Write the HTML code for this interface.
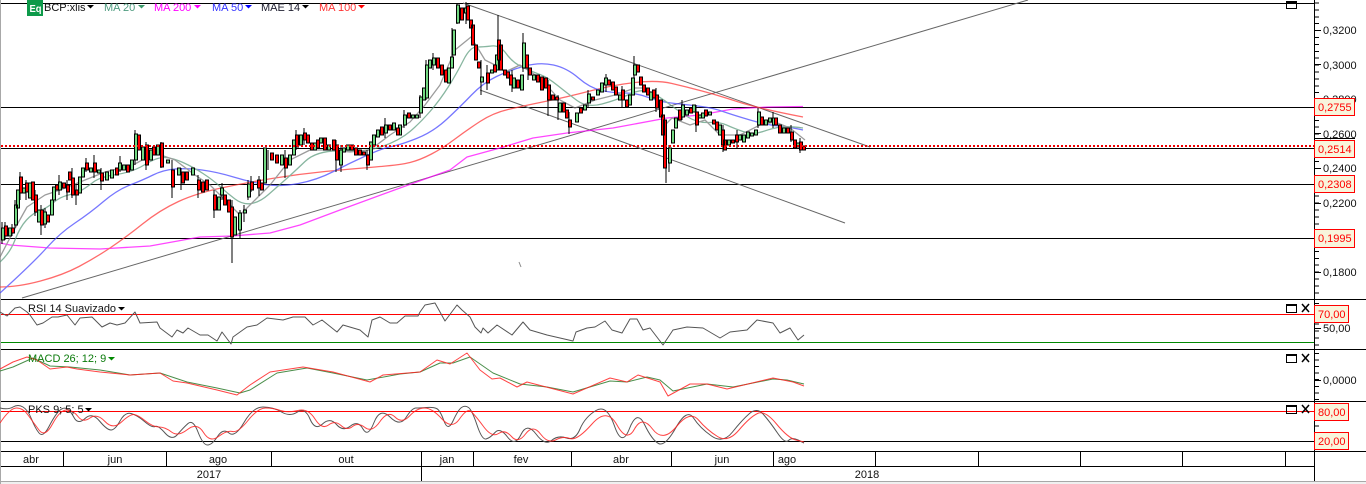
<!DOCTYPE html>
<html><head><meta charset="utf-8"><title>BCP:xlis</title>
<style>
html,body{margin:0;padding:0;width:1366px;height:484px;overflow:hidden;background:#fff}
svg{display:block;position:absolute;left:0;top:0}
text{font-family:"Liberation Sans",Arial,sans-serif;font-size:11px;fill:#111}
.box{fill:#f8f5dc;stroke:#f00;stroke-width:1}
.lb{fill:#f00}
.w{fill:none;stroke:#000;stroke-width:1}
</style></head><body>
<svg width="1366" height="484" viewBox="0 0 1366 484">
<rect x="0" y="0" width="1366" height="484" fill="#fff"/>
<rect x="0" y="481" width="1366" height="3" fill="#f0f0f0"/>
<rect x="0" y="481" width="1366" height="1" fill="#a8a8a8"/>
<rect x="0" y="0" width="1" height="484" fill="#a8a8a8"/>

<!-- horizontal levels -->
<g shape-rendering="crispEdges" stroke-width="1" fill="none">
<path stroke="#000" d="M1 3.5H1314M1 107.5H1314M1 148.5H1314M1 184.5H1314M1 238.5H1314M1 299.5H1366M1 349.5H1366M1 401.5H1366M1 441.5H1314M1 451.5H1366M1 466.5H1314"/>
<path stroke="#f00" d="M1 314.5H1314M1 411.5H1314"/>
<path stroke="#080" d="M1 342.5H1314"/>
<path stroke="#000" d="M1314.5 0V481M63.5 451V466M166.5 451V466M271.5 451V466M421.5 451V481M473.5 451V466M571.5 451V466M671.5 451V466M773.5 451V466M875.5 451V466M978.5 451V466M1080.5 451V466M1182.5 451V466M1285.5 451V466"/>
</g>

<!-- trend lines -->
<g fill="none" stroke="#666" stroke-width="1">
<path d="M22 298L1028 0"/>
<path d="M463 3L870 147"/>
<path d="M480 90L845 223"/>
</g>

<!-- moving averages -->
<g fill="none" stroke-width="1.3" opacity=".72" stroke-linejoin="round">
<polyline stroke="#f0f" points="0,243 10,245 50,248 100,249 150,246 200,237 232,236 270,233 300,225 340,210 400,188 450,170 467,157 500,148 533,138 567,133 613,128 667,118 700,115 733,109 767,107 803,106.5"/>
<path stroke="#f33" d="M0 287 Q18 287 40.5 281 Q63 275 79 266.5 Q95 258 110 248 Q125 238 142.5 224 Q160 210 178.5 201.5 Q197 193 223.5 187.5 Q250 182 275 178 Q300 174 325 171.5 Q350 169 375 167 Q400 165 410 162.5 Q420 160 431.5 154 Q443 148 455 139 Q467 130 480 121.5 Q493 113 508 109.5 Q523 106 545 101.5 Q567 97 590 91 Q613 85 635 82.5 Q657 80 672 83.5 Q687 87 702 91 Q717 95 737 101.5 Q757 108 803 117"/>
<path stroke="#44f" d="M0 293 Q33 263 46.5 248 Q60 233 75 223 Q90 213 103.5 201.5 Q117 190 130 185 Q143 180 153 175 Q163 170 175 169 Q187 168 202 170 Q217 172 233.5 177 Q250 182 265 184.5 Q280 187 298.5 183.5 Q317 180 333.5 171.5 Q350 163 366.5 155.5 Q383 148 391.5 146.5 Q400 145 416.5 138.5 Q433 132 446.5 119.5 Q460 107 471.5 95 Q483 83 496.5 76.5 Q510 70 525 66 Q540 62 553.5 65 Q567 68 578.5 78 Q590 88 601.5 90.5 Q613 93 625 93 Q637 93 648.5 97.5 Q660 102 675 103.5 Q690 105 701.5 106.5 Q713 108 723 111.5 Q733 115 750 120 Q767 125 778.5 126 Q790 127 803 130"/>
<path stroke="#5b9a7c" d="M0 262 Q10 253 15 240 Q20 227 26.5 220 Q33 213 40 210.5 Q47 208 53.5 202.5 Q60 197 68.5 195 Q77 193 82 190 Q87 187 93.5 182 Q100 177 116.5 174.5 Q133 172 145 164.5 Q157 157 165 157.5 Q173 158 183 162.5 Q193 167 203 173.5 Q213 180 220 186.5 Q227 193 235 199 Q243 205 251.5 203.5 Q260 202 268.5 194.5 Q277 187 285 180 Q293 173 305 161.5 Q317 150 342 151 Q367 152 383.5 146 Q400 140 410 131.5 Q420 123 430 111.5 Q440 100 448.5 86.5 Q457 73 463.5 60 Q470 47 476.5 47 Q483 47 491.5 46 Q500 45 506.5 54 Q513 63 523 67.5 Q533 72 540 74.5 Q547 77 557 85 Q567 93 577 100.5 Q587 108 602 104 Q617 100 630 94 Q643 88 651.5 92.5 Q660 97 668.5 103.5 Q677 110 687 116.5 Q697 123 708.5 122.5 Q720 122 726.5 125 Q733 128 743 131.5 Q753 135 763 131.5 Q773 128 781.5 127 Q790 126 803 128"/>
<polyline stroke="#777" points="0,257 13,232 27,207 45,195 60,190 80,182 105,172 133,165 155,153 175,160 195,175 210,185 225,200 240,215 255,200 270,185 290,160 310,150 330,150 350,152 370,150 390,135 410,122 425,105 440,85 455,50 471,37 485,60 495,65 505,72 520,65 540,78 560,100 575,108 595,100 615,95 635,88 645,88 660,105 665,125 672,118 690,125 705,120 720,135 740,135 760,125 775,122 790,128 805,140"/>
</g>

<!-- candles -->
<g shape-rendering="crispEdges" stroke="#000" stroke-width="1">
<path fill="none" d="M2 222V244M5 222V240M12 224V236M15 200V228M20 172V200M26 180V200M35 190V216M41 205V235M45 208V228M59 175V195M67 180V200M72 168V198M76 185V205M86 158V172M94 155V178M101 168V190M120 156V172M135 130V165M146 142V170M161 142V168M172 160V198M181 168V190M198 175V198M214 190V218M222 183V200M232 200V263M240 210V238M244 205V222M248 180V200M251 176V192M259 176V196M268 150V170M285 150V178M296 130V150M304 128V145M336 140V172M341 145V172M367 150V170M385 118V138M404 110V128M420 95V118M426 60V100M433 53V70M452 28V58M457 3V24M466 2V24M481 60V95M487 65V90M498 15V62M512 70V92M523 33V72M528 55V80M548 80V116M558 95V120M569 112V134M588 90V108M606 74V92M622 86V108M634 56V78M656 88V112M666 140V183M669 145V172M682 100V120M696 105V132M723 125V152M737 130V148M758 108V128M773 112V128M791 125V142M800 138V153"/>
<path fill="#72d882" d="M1.5 228h3V240h-3zM8.5 228h3V236h-3zM14.5 205h3V225h-3zM16.5 190h3V208h-3zM22.5 188h3V193h-3zM28.5 183h3V198h-3zM37.5 210h3V222h-3zM43.5 212h3V224h-3zM50.5 200h3V215h-3zM52.5 187h3V200h-3zM58.5 182h3V190h-3zM78.5 177h3V193h-3zM81.5 168h3V177h-3zM89.5 168h3V172h-3zM97.5 170h3V173h-3zM105.5 172h3V180h-3zM110.5 170h3V178h-3zM118.5 163h3V170h-3zM122.5 165h3V170h-3zM130.5 160h3V170h-3zM134.5 134h3V160h-3zM141.5 147h3V160h-3zM149.5 150h3V160h-3zM156.5 145h3V155h-3zM166.5 160h3V163h-3zM177.5 168h3V175h-3zM191.5 168h3V175h-3zM217.5 197h3V210h-3zM220.5 188h3V195h-3zM233.5 217h3V235h-3zM238.5 213h3V230h-3zM243.5 210h3V213h-3zM247.5 184h3V197h-3zM263.5 148h3V183h-3zM280.5 155h3V165h-3zM288.5 155h3V165h-3zM292.5 140h3V155h-3zM299.5 135h3V145h-3zM313.5 143h3V150h-3zM319.5 138h3V143h-3zM327.5 145h3V150h-3zM339.5 150h3V165h-3zM342.5 148h3V152h-3zM346.5 145h3V150h-3zM369.5 142h3V160h-3zM372.5 135h3V145h-3zM376.5 130h3V137h-3zM384.5 125h3V133h-3zM392.5 123h3V130h-3zM398.5 125h3V135h-3zM403.5 115h3V125h-3zM411.5 115h3V118h-3zM415.5 115h3V118h-3zM419.5 97h3V113h-3zM422.5 88h3V100h-3zM425.5 65h3V98h-3zM428.5 60h3V68h-3zM432.5 58h3V65h-3zM447.5 68h3V83h-3zM450.5 57h3V68h-3zM452.5 30h3V55h-3zM456.5 5h3V23h-3zM464.5 8h3V13h-3zM480.5 77h3V82h-3zM490.5 70h3V73h-3zM495.5 55h3V70h-3zM512.5 78h3V88h-3zM520.5 75h3V90h-3zM522.5 43h3V68h-3zM532.5 75h3V80h-3zM558.5 103h3V112h-3zM575.5 113h3V122h-3zM583.5 105h3V110h-3zM587.5 94h3V103h-3zM596.5 90h3V95h-3zM600.5 83h3V92h-3zM604.5 78h3V85h-3zM618.5 95h3V100h-3zM628.5 95h3V105h-3zM631.5 78h3V95h-3zM633.5 65h3V75h-3zM649.5 92h3V100h-3zM668.5 148h3V163h-3zM671.5 130h3V143h-3zM674.5 118h3V128h-3zM681.5 105h3V117h-3zM685.5 110h3V115h-3zM692.5 105h3V112h-3zM698.5 115h3V118h-3zM701.5 113h3V118h-3zM708.5 112h3V115h-3zM718.5 125h3V135h-3zM727.5 140h3V145h-3zM738.5 135h3V140h-3zM742.5 135h3V142h-3zM746.5 132h3V138h-3zM750.5 133h3V136h-3zM754.5 130h3V135h-3zM757.5 112h3V125h-3zM764.5 120h3V125h-3zM768.5 118h3V122h-3zM772.5 118h3V125h-3zM782.5 128h3V133h-3zM796.5 143h3V147h-3z"/>
<path fill="#f00" d="M4.5 226h3V236h-3zM11.5 228h3V233h-3zM19.5 177h3V193h-3zM25.5 183h3V192h-3zM31.5 182h3V200h-3zM34.5 195h3V212h-3zM40.5 210h3V225h-3zM46.5 215h3V222h-3zM55.5 185h3V190h-3zM62.5 183h3V188h-3zM66.5 185h3V192h-3zM68.5 172h3V180h-3zM71.5 178h3V195h-3zM75.5 190h3V195h-3zM85.5 163h3V170h-3zM93.5 163h3V172h-3zM100.5 173h3V181h-3zM115.5 168h3V175h-3zM126.5 165h3V172h-3zM137.5 135h3V150h-3zM145.5 145h3V165h-3zM152.5 147h3V155h-3zM160.5 143h3V167h-3zM171.5 170h3V187h-3zM181.5 172h3V183h-3zM185.5 172h3V180h-3zM197.5 180h3V190h-3zM201.5 182h3V192h-3zM205.5 180h3V190h-3zM213.5 195h3V210h-3zM223.5 195h3V205h-3zM227.5 200h3V212h-3zM230.5 207h3V237h-3zM250.5 182h3V190h-3zM257.5 180h3V188h-3zM260.5 183h3V190h-3zM270.5 153h3V160h-3zM275.5 155h3V163h-3zM284.5 158h3V168h-3zM295.5 135h3V147h-3zM303.5 133h3V140h-3zM306.5 135h3V143h-3zM310.5 143h3V150h-3zM316.5 140h3V148h-3zM323.5 138h3V150h-3zM332.5 140h3V150h-3zM335.5 145h3V160h-3zM350.5 145h3V150h-3zM354.5 148h3V155h-3zM358.5 150h3V155h-3zM362.5 152h3V155h-3zM366.5 155h3V165h-3zM380.5 127h3V135h-3zM388.5 125h3V130h-3zM396.5 128h3V135h-3zM407.5 113h3V118h-3zM436.5 58h3V68h-3zM440.5 65h3V75h-3zM444.5 70h3V82h-3zM460.5 8h3V20h-3zM466.5 6h3V20h-3zM469.5 20h3V28h-3zM471.5 25h3V45h-3zM474.5 45h3V60h-3zM477.5 62h3V68h-3zM486.5 73h3V83h-3zM493.5 65h3V72h-3zM497.5 40h3V60h-3zM499.5 45h3V70h-3zM503.5 70h3V75h-3zM506.5 72h3V78h-3zM509.5 75h3V85h-3zM516.5 80h3V88h-3zM525.5 55h3V68h-3zM528.5 68h3V75h-3zM536.5 75h3V82h-3zM540.5 77h3V90h-3zM544.5 78h3V88h-3zM547.5 85h3V100h-3zM551.5 95h3V100h-3zM555.5 97h3V100h-3zM562.5 103h3V112h-3zM565.5 110h3V118h-3zM568.5 120h3V127h-3zM579.5 108h3V113h-3zM591.5 97h3V100h-3zM607.5 80h3V85h-3zM611.5 82h3V90h-3zM614.5 87h3V95h-3zM621.5 90h3V100h-3zM625.5 100h3V107h-3zM636.5 65h3V72h-3zM639.5 77h3V85h-3zM642.5 85h3V92h-3zM646.5 88h3V95h-3zM652.5 90h3V98h-3zM655.5 95h3V108h-3zM659.5 100h3V117h-3zM661.5 115h3V135h-3zM663.5 120h3V168h-3zM678.5 110h3V120h-3zM689.5 108h3V113h-3zM695.5 112h3V125h-3zM704.5 110h3V116h-3zM712.5 120h3V124h-3zM715.5 122h3V130h-3zM721.5 130h3V145h-3zM723.5 140h3V150h-3zM731.5 140h3V143h-3zM735.5 135h3V142h-3zM760.5 117h3V125h-3zM774.5 118h3V125h-3zM778.5 125h3V133h-3zM786.5 128h3V133h-3zM790.5 132h3V140h-3zM793.5 140h3V148h-3zM799.5 142h3V150h-3zM802.5 146h3V150h-3z"/>
</g>
<path d="M519 262l2 5" stroke="#888" fill="none"/>

<!-- dotted level -->
<line x1="1" y1="146" x2="1314" y2="146" stroke="#e00" stroke-width="2" stroke-dasharray="2 2" shape-rendering="crispEdges"/>

<!-- RSI -->
<polyline fill="none" stroke="#555" stroke-width="1" stroke-linejoin="round" points="0,312 7,316 15,308 20,307 27,312 30,315 37,325 43,323 52,317 58,317 67,315 75,325 80,318 92,317 102,327 110,323 117,325 125,323 135,312 140,323 157,322 160,328 172,337 177,330 183,333 188,328 200,335 208,335 217,341 222,332 231,344 233,337 247,327 257,325 267,318 283,320 293,317 305,317 313,325 322,320 337,332 343,325 360,330 368,337 372,320 380,317 390,323 397,323 405,316 418,316 420,312 425,305 435,303 445,321 457,305 462,310 470,317 475,327 481,333 483,328 488,333 497,325 512,335 523,322 530,330 547,335 573,341 576,332 587,328 595,327 605,321 612,330 622,333 630,319 637,319 643,330 650,328 663,345 673,330 687,327 703,328 720,338 730,332 747,330 757,320 773,323 780,333 790,328 798,340 804,335"/>
<!-- MACD -->
<polyline fill="none" stroke="#2a7a2a" stroke-width="1" opacity=".85" stroke-linejoin="round" points="0,371 13,367 33,358 50,366 70,367 100,370 130,375 160,373 187,382 217,388 240,393 250,390 277,373 307,368 333,373 367,380 400,374 420,372 440,363 453,363 470,357 493,373 520,384 547,387 573,392 610,381 627,382 647,377 660,380 673,391 707,384 733,387 773,379 787,380 804,384"/>
<polyline fill="none" stroke="#f22" stroke-width="1" opacity=".85" stroke-linejoin="round" points="0,369 13,362 27,357 37,360 50,369 67,367 77,369 100,372 130,375 160,373 173,381 187,383 217,390 237,395 250,385 270,372 303,367 333,372 370,382 383,375 420,372 437,360 450,364 467,353 480,370 492,379 500,378 517,387 527,382 573,394 610,378 627,382 638,375 660,382 668,396 690,384 707,384 727,389 773,378 793,382 804,386"/>
<!-- PKS -->
<path fill="none" stroke="#555" stroke-width="1" d="M0 408 Q8 410 13 407 Q18 404 23 407 Q28 410 31.5 419 Q35 428 39 433 Q43 438 49 426.5 Q55 415 59 411 Q63 407 66.5 408.5 Q70 410 74 417.5 Q78 425 85 418.5 Q92 412 99.5 421 Q107 430 111 430 Q115 430 120 421 Q125 412 131 413.5 Q137 415 144.5 421.5 Q152 428 155 426.5 Q158 425 165 433 Q172 441 177.5 434.5 Q183 428 188 423.5 Q193 419 198 432 Q203 445 207.5 445 Q212 445 217.5 436.5 Q223 428 229 433 Q235 438 244 422.5 Q253 407 263 407 Q273 407 281.5 412 Q290 417 297.5 412 Q305 407 310 419 Q315 431 322.5 424 Q330 417 336.5 424.5 Q343 432 350.5 426 Q358 420 363 429 Q368 438 374 422.5 Q380 407 390 417 Q400 427 406 417.5 Q412 408 416 408 Q420 408 426.5 407.5 Q433 407 436.5 408.5 Q440 410 444 421 Q448 432 453 421 Q458 410 461.5 407.5 Q465 405 468.5 407.5 Q472 410 477 425 Q482 440 486 439 Q490 438 495 432.5 Q500 427 507.5 437 Q515 447 521 434.5 Q527 422 536 434 Q545 446 551.5 440.5 Q558 435 566.5 438 Q575 441 580 429 Q585 417 596 410.5 Q607 404 614.5 426 Q622 448 629.5 428.5 Q637 409 644.5 424.5 Q652 440 658.5 443.5 Q665 447 676 427.5 Q687 408 693.5 418 Q700 428 711.5 436 Q723 444 732.5 432 Q742 420 749.5 413.5 Q757 407 763.5 414.5 Q770 422 777.5 433 Q785 444 788.5 440.5 Q792 437 798 440 L804 443"/>
<path fill="none" stroke="#f22" stroke-width="1" opacity=".85" d="M0 423 Q10 408 16.5 408 Q23 408 28 415 Q33 422 39 430 Q45 438 52.5 424 Q60 410 66.5 410 Q73 410 78 416.5 Q83 423 90 418 Q97 413 105 421.5 Q113 430 121.5 422 Q130 414 134 414.5 Q138 415 145.5 421 Q153 427 159 427 Q165 427 171.5 432 Q178 437 187.5 429.5 Q197 422 203.5 432.5 Q210 443 218.5 436.5 Q227 430 232.5 431.5 Q238 433 248 420.5 Q258 408 265.5 408 Q273 408 280.5 410.5 Q288 413 298 410.5 Q308 408 315 419 Q322 430 328.5 425 Q335 420 341 425.5 Q347 431 352.5 426.5 Q358 422 365 427.5 Q372 433 380 421.5 Q388 410 395 417 Q402 424 409.5 416 Q417 408 424.5 408 Q432 408 442 419 Q452 430 459.5 419 Q467 408 471 411.5 Q475 415 483.5 426.5 Q492 438 498.5 433.5 Q505 429 511.5 436.5 Q518 444 525.5 434 Q533 424 540.5 434 Q548 444 555.5 440 Q563 436 570 438.5 Q577 441 592 424 Q607 407 617 425 Q627 443 634.5 429 Q642 415 652.5 429 Q663 443 676.5 426.5 Q690 410 698.5 420 Q707 430 717.5 436.5 Q728 443 739 430 Q750 417 757.5 413.5 Q765 410 776.5 424 Q788 438 796 440 L804 442"/>

<!-- y-axis ticks -->
<g shape-rendering="crispEdges">
<line x1="1317" y1="2.5" x2="1317" y2="299" stroke="#000" stroke-width="4" stroke-dasharray="1 5.9"/>
<line x1="1317" y1="303" x2="1317" y2="349" stroke="#000" stroke-width="4" stroke-dasharray="1 5.9"/>
<line x1="1317" y1="353" x2="1317" y2="401" stroke="#000" stroke-width="4" stroke-dasharray="1 5.55"/>
<line x1="1317" y1="405" x2="1317" y2="451" stroke="#000" stroke-width="4" stroke-dasharray="1 5.9"/>
<path stroke="#000" d="M1315 30.5h6M1315 64.5h6M1315 99.5h6M1315 133.5h6M1315 168.5h6M1315 203.5h6M1315 237.5h6M1315 272.5h6M1315 328.5h6M1315 380.5h6" fill="none"/>
</g>
<g>
<text x="1323" y="34">0,3200</text>
<text x="1323" y="69">0,3000</text>
<text x="1323" y="103">0,2800</text>
<text x="1323" y="138">0,2600</text>
<text x="1323" y="172">0,2400</text>
<text x="1323" y="207">0,2200</text>
<text x="1323" y="276">0,1800</text>
<text x="1323" y="332">50,00</text>
<text x="1323" y="384">0,0000</text>
</g>
<path d="M1315 138.5H1355" stroke="#000" fill="none" shape-rendering="crispEdges"/>
<g shape-rendering="crispEdges">
<rect class="box" x="1314.5" y="98.5" width="40" height="17"/>
<rect class="box" x="1314.5" y="140.5" width="40" height="17"/>
<rect class="box" x="1314.5" y="175.5" width="40" height="17"/>
<rect class="box" x="1314.5" y="229.5" width="40" height="18"/>
<rect class="box" x="1314.5" y="305.5" width="34" height="17"/>
<rect class="box" x="1314.5" y="403.5" width="34" height="17"/>
<rect class="box" x="1314.5" y="432.5" width="34" height="17"/>
</g>
<text class="lb" x="1318" y="111">0,2755</text>
<text class="lb" x="1318" y="153">0,2514</text>
<text class="lb" x="1318" y="188">0,2308</text>
<text class="lb" x="1318" y="242">0,1995</text>
<text class="lb" x="1318" y="318">70,00</text>
<text class="lb" x="1318" y="416">80,00</text>
<text class="lb" x="1318" y="445">20,00</text>

<!-- window buttons -->
<g shape-rendering="crispEdges">
<path class="w" d="M1286.5 2.5h10v6h-10z"/><rect x="1286" y="1" width="11" height="3"/>
<path class="w" d="M1286.5 304.5h10v8h-10z"/><rect x="1286" y="304" width="11" height="2"/>
<path class="w" d="M1286.5 354.5h10v8h-10z"/><rect x="1286" y="354" width="11" height="2"/>
<path class="w" d="M1286.5 405.5h10v8h-10z"/><rect x="1286" y="405" width="11" height="2"/>
</g>
<path d="M1302 304l7 8M1309 304l-7 8M1302 354l7 8M1309 354l-7 8M1302 405l7 8M1309 405l-7 8" stroke="#000" stroke-width="1.5" fill="none"/>

<!-- header legend -->
<rect x="27" y="0" width="16" height="16" fill="#0d9a4a"/>
<text x="29.5" y="12" textLength="12" lengthAdjust="spacingAndGlyphs" style="fill:#fff;font-weight:bold;font-size:10px">Eq</text>
<text x="44" y="11">BCP:xlis</text><path d="M87 5h7l-3.5 3.5z" fill="#000"/>
<text x="104" y="11" style="fill:#4f9c80">MA 20</text><path d="M138 5h7l-3.5 3.5z" fill="#3a9a6a"/>
<text x="154" y="11" style="fill:#f0f">MA 200</text><path d="M194 5h7l-3.5 3.5z" fill="#f0f"/>
<text x="212" y="11" style="fill:#33f">MA 50</text><path d="M245 5h7l-3.5 3.5z" fill="#00f"/>
<text x="261" y="11" style="fill:#223">MAE 14</text><path d="M302 5h7l-3.5 3.5z" fill="#000"/>
<text x="319" y="11" style="fill:#f33">MA 100</text><path d="M358 5h7l-3.5 3.5z" fill="#f00"/>

<text x="28" y="312">RSI 14 Suavizado</text><path d="M118 307h7l-3.5 3.5z" fill="#000"/>
<text x="28" y="362" style="fill:#0a7a0a">MACD 26; 12; 9</text><path d="M108 357h7l-3.5 3.5z" fill="#080"/>
<text x="28" y="413">PKS 9; 5; 5</text><path d="M85 408h7l-3.5 3.5z" fill="#000"/>

<!-- time axis -->
<g text-anchor="middle">
<text x="31" y="463">abr</text>
<text x="115" y="463">jun</text>
<text x="218" y="463">ago</text>
<text x="346" y="463">out</text>
<text x="447" y="463">jan</text>
<text x="521" y="463">fev</text>
<text x="621" y="463">abr</text>
<text x="722" y="463">jun</text>
<text x="787" y="463">ago</text>
<text x="209" y="478">2017</text>
<text x="867" y="478">2018</text>
</g>
</svg>
</body></html>
